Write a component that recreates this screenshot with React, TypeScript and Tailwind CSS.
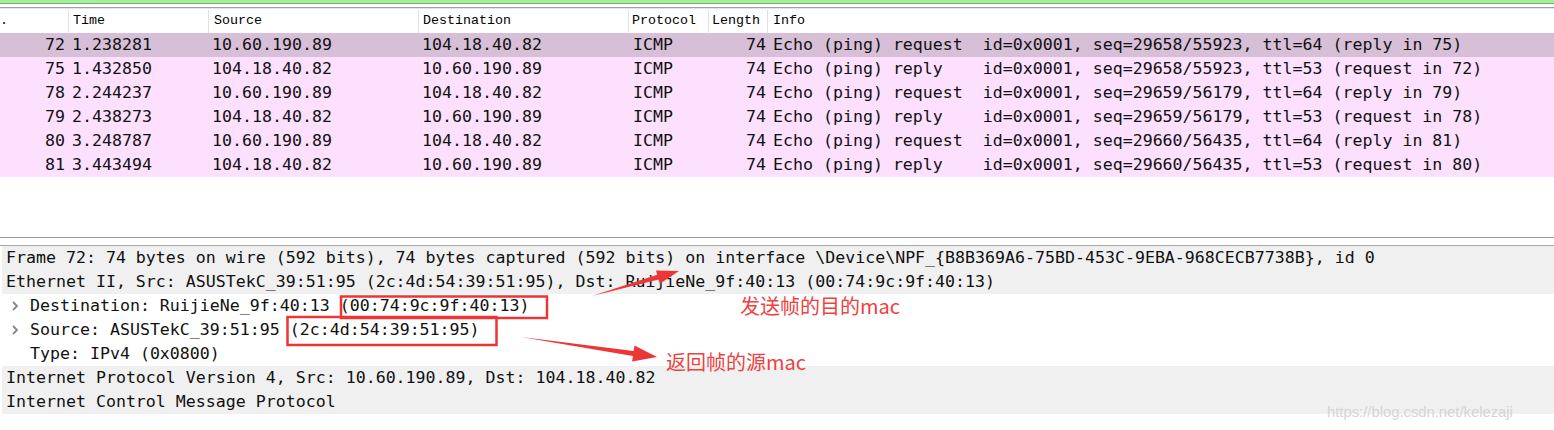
import React from "react";

type Pkt = { no: number; time: string; src: string; dst: string; info: string; sel?: boolean };

const packets: Pkt[] = [
  { no: 72, time: "1.238281", src: "10.60.190.89", dst: "104.18.40.82", info: "Echo (ping) request  id=0x0001, seq=29658/55923, ttl=64 (reply in 75)", sel: true },
  { no: 75, time: "1.432850", src: "104.18.40.82", dst: "10.60.190.89", info: "Echo (ping) reply    id=0x0001, seq=29658/55923, ttl=53 (request in 72)" },
  { no: 78, time: "2.244237", src: "10.60.190.89", dst: "104.18.40.82", info: "Echo (ping) request  id=0x0001, seq=29659/56179, ttl=64 (reply in 79)" },
  { no: 79, time: "2.438273", src: "104.18.40.82", dst: "10.60.190.89", info: "Echo (ping) reply    id=0x0001, seq=29659/56179, ttl=53 (request in 78)" },
  { no: 80, time: "3.248787", src: "10.60.190.89", dst: "104.18.40.82", info: "Echo (ping) request  id=0x0001, seq=29660/56435, ttl=64 (reply in 81)" },
  { no: 81, time: "3.443494", src: "104.18.40.82", dst: "10.60.190.89", info: "Echo (ping) reply    id=0x0001, seq=29660/56435, ttl=53 (request in 80)" },
];

const cols = "grid grid-cols-[69px_140px_210px_210px_80px_59px_1fr]";

function Chevron() {
  return (
    <svg width="8" height="10" viewBox="0 0 8 10" className="shrink-0">
      <polyline points="2,1 6,5 2,9" fill="none" stroke="#858585" strokeWidth="1.8" />
    </svg>
  );
}

function DetailRow({ text, gray, child, chevron }: { text: string; gray?: boolean; child?: boolean; chevron?: boolean }) {
  return (
    <div className={`h-[24px] flex items-center whitespace-pre ${gray ? "bg-[#f0f0f0]" : "bg-white"}`}>
      {child ? (
        <>
          <div className="w-[28px] flex items-center pl-[9px]">{chevron ? <Chevron /> : null}</div>
          <span>{text}</span>
        </>
      ) : (
        <span className="pl-[4px]">{text}</span>
      )}
    </div>
  );
}

export default function App() {
  return (
    <div className="relative w-[1554px] h-[430px] overflow-hidden bg-white text-black">
      {/* top green bar */}
      <div className="h-[3px] bg-[#a8eea0]" />
      <div className="h-[1px] bg-[#6cb866]" />
      <div className="h-[3px] bg-white" />
      <div className="h-[1px] bg-[#a0a0a0]" />
      <div className="h-[1px] bg-[#e4e4e4]" />

      {/* header */}
      <div className={`${cols} h-[24px] font-['Liberation_Mono',monospace] text-[13.33px] leading-[22px] pt-[1px] bg-white`}>
        <div className="border-r border-[#e2e2e2] pl-[0px]">.</div>
        <div className="border-r border-[#e2e2e2] pl-[4px]">Time</div>
        <div className="border-r border-[#e2e2e2] pl-[5px]">Source</div>
        <div className="border-r border-[#e2e2e2] pl-[4px]">Destination</div>
        <div className="border-r border-[#e2e2e2] pl-[3px]">Protocol</div>
        <div className="border-r border-[#e2e2e2] pl-[3px]">Length</div>
        <div className="pl-[5px]">Info</div>
      </div>

      {/* packet rows */}
      <div className="font-['DejaVu_Sans_Mono',monospace] text-[16.6px] leading-[24px] text-[#111]">
        {packets.map((p) => (
          <div key={p.no} className={`${cols} h-[24px] whitespace-pre ${p.sel ? "bg-[#d7bfd8]" : "bg-[#fce0fe]"}`}>
            <div className="text-right pr-[4px]">{p.no}</div>
            <div className="pl-[3px]">{p.time}</div>
            <div className="pl-[3px]">{p.src}</div>
            <div className="pl-[3px]">{p.dst}</div>
            <div className="pl-[4px]">ICMP</div>
            <div className="text-right pr-[2px]">74</div>
            <div className="pl-[5px]">{p.info}</div>
          </div>
        ))}
      </div>

      {/* empty area + splitter */}
      <div className="h-[60px] bg-white" />
      <div className="h-[1px] bg-[#9c9c9c]" />
      <div className="h-[7px] bg-white" />
      <div className="h-[1px] bg-[#a8a8a8]" />

      {/* detail pane */}
      <div className="ml-[2px] font-['DejaVu_Sans_Mono',monospace] text-[16.6px] leading-[24px] text-[#111]">
        <DetailRow gray text="Frame 72: 74 bytes on wire (592 bits), 74 bytes captured (592 bits) on interface \Device\NPF_{B8B369A6-75BD-453C-9EBA-968CECB7738B}, id 0" />
        <DetailRow gray text="Ethernet II, Src: ASUSTekC_39:51:95 (2c:4d:54:39:51:95), Dst: RuijieNe_9f:40:13 (00:74:9c:9f:40:13)" />
        <DetailRow child chevron text="Destination: RuijieNe_9f:40:13 (00:74:9c:9f:40:13)" />
        <DetailRow child chevron text="Source: ASUSTekC_39:51:95 (2c:4d:54:39:51:95)" />
        <DetailRow child text="Type: IPv4 (0x0800)" />
        <DetailRow gray text="Internet Protocol Version 4, Src: 10.60.190.89, Dst: 104.18.40.82" />
        <DetailRow gray text="Internet Control Message Protocol" />
      </div>

      {/* annotations */}
      <svg className="absolute left-0 top-0 pointer-events-none" width="1554" height="430" viewBox="0 0 1554 430">
        <rect x="341" y="296.5" width="206" height="21.5" fill="none" stroke="#ee3535" strokeWidth="2.5" />
        <rect x="287.5" y="317" width="209" height="28" fill="none" stroke="#ee3535" strokeWidth="2.5" />
        <polygon points="592,296 658.6,279.5 659.8,283.8 679,271 656,270.4 657.2,274.7" fill="#ee3535" />
        <polygon points="521,337 633.7,351 634.5,345.6 657,357 632.1,361.4 632.9,356" fill="#ee3535" />
      </svg>
      <div className="absolute left-[740px] top-[294px] leading-[24px] text-[20px] text-[#f04040] font-['Noto_Sans_CJK_SC','Liberation_Sans',sans-serif] whitespace-nowrap">
        发送帧的目的mac
      </div>
      <div className="absolute left-[666px] top-[350px] leading-[24px] text-[20px] text-[#f04040] font-['Noto_Sans_CJK_SC','Liberation_Sans',sans-serif] whitespace-nowrap">
        返回帧的源mac
      </div>
      <div className="absolute left-[1327px] top-[402px] leading-[20px] text-[14.8px] text-[#d4d4d4] font-['Liberation_Sans',sans-serif] whitespace-nowrap">
        https://blog.csdn.net/kelezaji
      </div>
    </div>
  );
}
